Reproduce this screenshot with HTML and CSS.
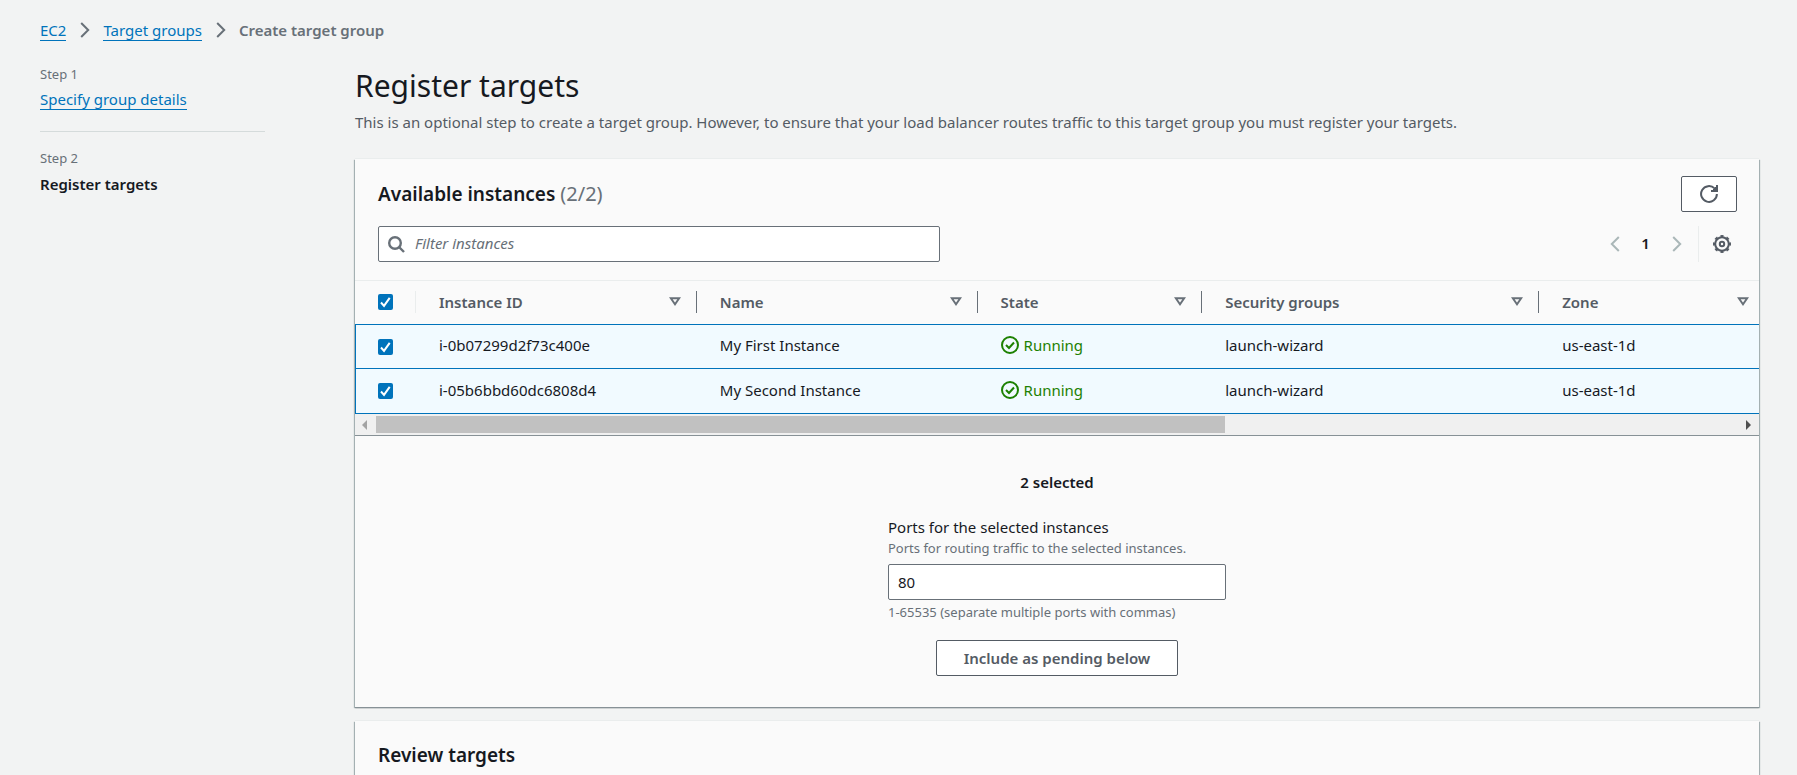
FILE: index.html
```html
<!DOCTYPE html>
<html lang="en">
<head>
<meta charset="utf-8">
<title>Create target group</title>
<link rel="stylesheet" href="styles.css">
</head>
<body>
<svg class="sprite" aria-hidden="true">
  <symbol id="chevron" viewBox="0 0 10 16"><path d="M1.2 1 8.2 8l-7 7"/></symbol>
  <symbol id="chevron-left" viewBox="0 0 10 16"><path d="M8.8 1 1.8 8l7 7"/></symbol>
  <symbol id="sort" viewBox="0 0 12 9"><path d="M1.8 1.2h8.4L6 7.2z"/></symbol>
  <symbol id="ok" viewBox="0 0 18 18"><circle cx="9" cy="9" r="8"/><path d="m5 9 3 3 5-5.500"/></symbol>
</svg>

<nav class="breadcrumb" aria-label="Breadcrumb">
  <a class="link" href="#">EC2</a>
  <svg class="crumb-sep"><use href="#chevron"/></svg>
  <a class="link" href="#">Target groups</a>
  <svg class="crumb-sep"><use href="#chevron"/></svg>
  <span class="crumb-current">Create target group</span>
</nav>

<div class="layout">
  <aside class="steps">
    <div class="step">
      <div class="step-label">Step 1</div>
      <a class="link" href="#">Specify group details</a>
    </div>
    <div class="step">
      <div class="step-label">Step 2</div>
      <div class="step-current">Register targets</div>
    </div>
  </aside>

  <main class="main">
    <h1>Register targets</h1>
    <p class="description">This is an optional step to create a target group. However, to ensure that your load balancer routes traffic to this target group you must register your targets.</p>

    <section class="card">
      <header class="card-header">
        <div class="bar">
          <h2>Available instances <span class="count">(2/2)</span></h2>
          <button class="button refresh" type="button" aria-label="Refresh">
            <svg viewBox="0 0 18 18"><path d="M16.900 9A7.900 7.900 0 1 1 14.600 3.400L16 5M17 0v6h-6M16 2v3h-3"/></svg>
          </button>
        </div>
        <div class="bar">
          <label class="search">
            <svg viewBox="0 0 17 17"><circle cx="7" cy="7" r="5.800"/><path d="m11 11 5 5"/></svg>
            <input type="text" placeholder="Filter instances" aria-label="Filter instances">
          </label>
          <div class="tools">
            <button class="icon-button" type="button" aria-label="Previous page"><svg class="pager"><use href="#chevron-left"/></svg></button>
            <button class="icon-button page" type="button">1</button>
            <button class="icon-button" type="button" aria-label="Next page"><svg class="pager"><use href="#chevron"/></svg></button>
            <button class="icon-button settings" type="button" aria-label="Preferences">
              <svg viewBox="0 0 18 18"><circle cx="9" cy="9" r="6.800"/><circle cx="9" cy="9" r="8" pathLength="16" stroke-dasharray="1" stroke-dashoffset=".5"/><circle cx="9" cy="9" r="2.200"/></svg>
            </button>
          </div>
        </div>
      </header>

      <table class="instances">
        <colgroup><col class="c-check"><col class="c-20"><col class="c-20"><col class="c-16"><col class="c-24"><col></colgroup>
        <thead>
          <tr>
            <th class="check"><div class="check-box"><input type="checkbox" checked aria-label="Select all instances"></div></th>
            <th><button class="sort" type="button">Instance ID<svg><use href="#sort"/></svg></button></th>
            <th><button class="sort" type="button">Name<svg><use href="#sort"/></svg></button></th>
            <th><button class="sort" type="button">State<svg><use href="#sort"/></svg></button></th>
            <th><button class="sort" type="button">Security groups<svg><use href="#sort"/></svg></button></th>
            <th><button class="sort" type="button">Zone<svg><use href="#sort"/></svg></button></th>
          </tr>
        </thead>
        <tbody>
          <tr>
            <td class="check"><input type="checkbox" checked aria-label="Select My First Instance"></td>
            <td>i-0b07299d2f73c400e</td>
            <td>My First Instance</td>
            <td><span class="status"><svg><use href="#ok"/></svg>Running</span></td>
            <td>launch-wizard</td>
            <td>us-east-1d</td>
          </tr>
          <tr>
            <td class="check"><input type="checkbox" checked aria-label="Select My Second Instance"></td>
            <td>i-05b6bbd60dc6808d4</td>
            <td>My Second Instance</td>
            <td><span class="status"><svg><use href="#ok"/></svg>Running</span></td>
            <td>launch-wizard</td>
            <td>us-east-1d</td>
          </tr>
        </tbody>
      </table>
      <div class="scrollbar" aria-hidden="true">
        <svg class="arrow-left" viewBox="0 0 5 10"><path d="M5 0v10L0 5z"/></svg>
        <div class="track"><div class="thumb"></div></div>
        <svg class="arrow-right" viewBox="0 0 5 10"><path d="M0 0v10l5-5z"/></svg>
      </div>

      <form class="ports">
        <div class="selected">2 selected</div>
        <div class="field">
          <label for="ports">Ports for the selected instances</label>
          <div class="hint" id="ports-hint">Ports for routing traffic to the selected instances.</div>
          <input id="ports" type="text" value="80" aria-describedby="ports-hint ports-limit">
          <div class="hint" id="ports-limit">1-65535 (separate multiple ports with commas)</div>
        </div>
        <button class="button include" type="button">Include as pending below</button>
      </form>
    </section>

    <section class="card review">
      <h2>Review targets</h2>
    </section>
  </main>
</div>
</body>
</html>
```
FILE: styles.css
```css
* { box-sizing: border-box; }

body {
  margin: 0;
  padding: 19px 38px 0 40px;
  background: #f2f3f3;
  color: #16191f;
  font: 15px/22px "Noto Sans", "Open Sans", sans-serif;
}

html { overflow: hidden; }

button, input { font: inherit; color: inherit; }

svg { fill: none; stroke: currentColor; stroke-width: 2; flex: none; }

.sprite { display: none; }

.link {
  color: #0073bb;
  text-decoration: none;
  border-bottom: 1px solid currentColor;
  line-height: 20px;
  display: inline-block;
}

.breadcrumb { display: flex; align-items: center; height: 22px; color: #687078; }
.crumb-sep { width: 10px; height: 16px; margin: 0 13px 0 14px; }
.crumb-current { font-weight: 600; }

.layout { display: grid; grid-template-columns: 225px minmax(0, 1fr); gap: 90px; }

.steps { padding-top: 23px; }
.step + .step { margin-top: 21px; padding-top: 16px; border-top: 1px solid #d5dbdb; }
.step-label { color: #687078; font-size: 13px; line-height: 20px; margin-bottom: 4px; }
.step-current { font-weight: 600; padding-top: 1px; }

.main { padding-top: 27px; }

h1 { margin: 0 0 7px; font-size: 30px; line-height: 36px; font-weight: 400; }
h2 { margin: 0; font-size: 19px; line-height: 22px; font-weight: 600; }
.description { margin: 0 0 26px; color: #545b64; }
.count { color: #687078; font-size: 20px; font-weight: 400; }

.card {
  background: #fafafa;
  box-shadow: 0 -1px 0 #eaeded, 0 1px 1px #879196, 1px 1px 1px #aab7b8, -1px 1px 1px #aab7b8;
}

.card-header {
  display: grid;
  gap: 14px;
  padding: 17px 22px 18px 23px;
  border-bottom: 1px solid #eaeded;
}
.bar { display: flex; align-items: center; justify-content: space-between; }

.button {
  height: 36px;
  border: 1px solid #545b64;
  border-radius: 2px;
  background: #fff;
  color: #545b64;
  font-weight: 600;
}
.refresh { width: 56px; padding: 0; display: grid; place-items: center; }
.refresh svg { width: 18px; height: 18px; }

.search {
  display: flex;
  align-items: center;
  gap: 10px;
  flex: 0 1 562px;
  height: 36px;
  padding: 0 9px;
  border: 1px solid #687078;
  border-radius: 2px;
  background: #fff;
  color: #687078;
}
.search svg { width: 17px; height: 17px; stroke-width: 2.4; }
.search input { flex: 1; min-width: 0; border: 0; padding: 0 0 2px; background: none; outline: 0; }
.search input::placeholder { color: #687078; font-style: italic; opacity: 1; }

.tools { display: flex; align-items: center; }
.icon-button { width: 31px; height: 36px; border: 0; padding: 0; background: none; display: grid; place-items: center; color: #545b64; }
.page { font-weight: 600; color: #16191f; padding-bottom: 3px; }
.pager { width: 10px; height: 16px; color: #aab7b8; }
.settings { width: 39px; margin-left: 6px; padding-left: 7px; border-left: 1px solid #eaeded; }
.settings svg { width: 18px; height: 18px; }

.instances { width: 100%; table-layout: fixed; border-collapse: separate; border-spacing: 0; }
.c-check { width: 61px; }
.c-16 { width: 16%; }
.c-20 { width: 20%; }
.c-24 { width: 24%; }

th { padding: 10px 0 11px; text-align: left; color: #545b64; font-weight: 600; }
.check-box { display: flex; align-items: center; height: 22px; border-right: 1px solid #eaeded; padding-left: 23px; }
.sort {
  display: flex;
  align-items: center;
  justify-content: space-between;
  width: 100%;
  height: 22px;
  padding: 0 15px 1px 23px;
  border: 0;
  border-right: 1px solid #687078;
  background: none;
  font-weight: 600;
  line-height: 20px;
}
.sort svg { width: 12px; height: 9px; color: #687078; }
th:last-child .sort { padding-right: 10px; border-right: 0; }

td { height: 44px; padding: 0 0 3px 23px; background: #f1faff; border-top: 1px solid #0073bb; }
tr:last-child td { border-bottom: 1px solid #0073bb; height: 46px; }
td.check { padding: 0 0 0 22px; border-left: 1px solid #0073bb; }

input[type="checkbox"] {
  appearance: none;
  display: block;
  width: 15px;
  height: 16px;
  margin: 0;
  border-radius: 2px;
  background: #0073bb url("data:image/svg+xml,%3Csvg xmlns='http://www.w3.org/2000/svg' viewBox='0 0 15 16'%3E%3Cpath d='M3 8.500l3 3.300 5.700-8' fill='none' stroke='white' stroke-width='2'/%3E%3C/svg%3E") center / contain no-repeat;
}

.status { display: flex; align-items: center; gap: 5px; color: #1d8102; }
.status svg { width: 18px; height: 18px; }

.scrollbar {
  display: flex;
  align-items: center;
  height: 22px;
  padding: 0 8px 0 7px;
  background: #f0f0f0;
  border-bottom: 1px solid #879196;
}
.scrollbar svg { width: 5px; height: 10px; stroke: none; }
.arrow-left { fill: #a3a3a3; }
.arrow-right { fill: #505050; }
.track { flex: 1; padding: 0 0 0 9px; }
.thumb { width: 62%; height: 17px; background: #c1c1c1; }

.ports { display: flex; flex-direction: column; align-items: center; padding: 35px 0 31px; }
.selected { font-weight: 600; margin-bottom: 23px; }
.field { width: 338px; max-width: 100%; margin-bottom: 18px; display: grid; }
.hint { color: #687078; font-size: 13px; line-height: 20px; }
.field input {
  width: 100%;
  height: 36px;
  margin: 6px 0 2px;
  padding: 0 9px 1px;
  border: 1px solid #687078;
  border-radius: 2px;
  background: #fff;
}
.include { padding: 0 27px 1px; }

.review { margin-top: 14px; padding: 23px; min-height: 80px; }
```
